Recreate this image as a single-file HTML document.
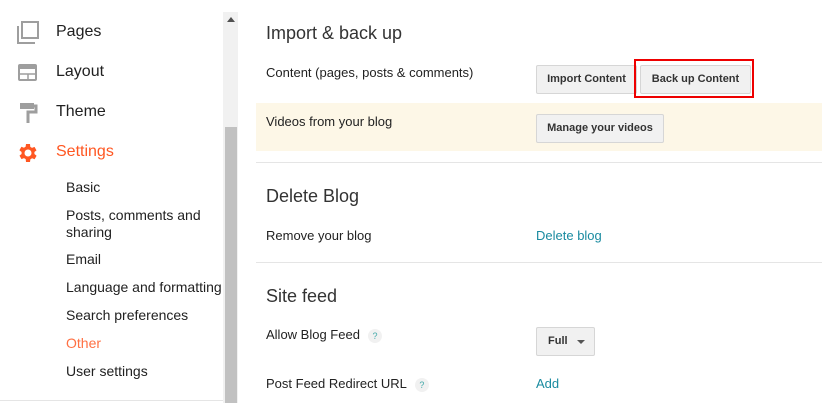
<!DOCTYPE html><html><head><style>
body{margin:0;width:822px;height:403px;overflow:hidden;background:#fff;font-family:"Liberation Sans",Arial,sans-serif;position:relative}
.a{position:absolute;white-space:nowrap}
.nav{font-size:16px;color:#212121}
.sub{font-size:14px;color:#212121}
.h{font-size:18px;color:#333}
.l{font-size:13px;color:#222}
.btn{position:absolute;background:#f1f1f1;border:1px solid #d6d6d6;border-radius:2px;font-size:11px;font-weight:bold;color:#333;text-align:center;box-sizing:border-box;line-height:27px}
.lnk{font-size:13px;color:#1a8ba0}
.q{display:inline-block;width:14px;height:14px;border-radius:7px;background:#f1f1f1;color:#4aa;font-size:9px;text-align:center;line-height:14px;margin-left:8px;vertical-align:middle}
.hr{position:absolute;left:256px;width:566px;height:1px;background:#e5e5e5}
</style></head><body>
<div class="a" style="left:223px;top:12px;width:15px;height:391px;background:#f1f1f1"></div>
<div class="a" style="left:225px;top:127px;width:12px;height:276px;background:#c1c1c1"></div>
<div class="a" style="left:227px;top:17px;width:0;height:0;border-left:4px solid transparent;border-right:4px solid transparent;border-bottom:5px solid #505050"></div>
<div class="a" style="left:0;top:400px;width:223px;height:1px;background:#e5e5e5"></div>
<svg class="a" style="left:16px;top:21px" width="24" height="24"><path d="M2 5v17h17" fill="none" stroke="#9e9e9e" stroke-width="2"/><rect x="6" y="1" width="16" height="16" fill="none" stroke="#9e9e9e" stroke-width="2"/></svg>
<svg class="a" style="left:18px;top:63px" width="20" height="20"><rect x="1" y="2" width="17" height="15" rx="1" fill="none" stroke="#9e9e9e" stroke-width="2"/><rect x="1" y="2" width="17" height="4" fill="#9e9e9e"/><path d="M1 11h17M10 11v6" stroke="#9e9e9e" stroke-width="1.5"/></svg>
<svg class="a" style="left:19px;top:102px" width="20" height="22"><rect x="1" y="1" width="14" height="6" fill="#9e9e9e"/><path d="M15 4h2v6h-8v11" fill="none" stroke="#9e9e9e" stroke-width="3"/></svg>
<svg class="a" style="left:16px;top:141px" width="24" height="24" viewBox="0 0 24 24"><path fill="#ff5722" d="M19.4 13a7.5 7.5 0 0 0 0-2l2.1-1.6-2-3.5-2.5 1a7 7 0 0 0-1.7-1L15 3h-4l-.4 2.7a7 7 0 0 0-1.7 1l-2.5-1-2 3.5L6.6 11a7.5 7.5 0 0 0 0 2l-2.1 1.6 2 3.5 2.5-1a7 7 0 0 0 1.7 1L11 21h4l.4-2.7a7 7 0 0 0 1.7-1l2.5 1 2-3.5zM13 15.5a3.5 3.5 0 1 1 0-7 3.5 3.5 0 0 1 0 7z" transform="translate(-1 0)"/></svg>
<div class="a nav" style="left:56px;top:23px">Pages</div>
<div class="a nav" style="left:56px;top:63px">Layout</div>
<div class="a nav" style="left:56px;top:103px">Theme</div>
<div class="a nav" style="left:56px;top:143px;color:#ff5722">Settings</div>
<div class="a sub" style="left:66px;top:179px">Basic</div>
<div class="a sub" style="left:66px;top:207px;line-height:17px">Posts, comments and<br>sharing</div>
<div class="a sub" style="left:66px;top:251px">Email</div>
<div class="a sub" style="left:66px;top:279px">Language and formatting</div>
<div class="a sub" style="left:66px;top:307px">Search preferences</div>
<div class="a sub" style="left:66px;top:335px;color:#ff7043">Other</div>
<div class="a sub" style="left:66px;top:363px">User settings</div>

<div class="a h" style="left:266px;top:23px">Import &amp; back up</div>
<div class="a l" style="left:266px;top:65px">Content (pages, posts &amp; comments)</div>
<div class="btn" style="left:536px;top:65px;width:101px;height:29px">Import Content</div>
<div class="a" style="left:634px;top:59px;width:116px;height:35px;border:2px solid #e00"></div>
<div class="btn" style="left:640px;top:65px;width:111px;height:29px">Back up Content</div>
<div class="a" style="left:256px;top:103px;width:566px;height:48px;background:#fdf7e7"></div>
<div class="a l" style="left:266px;top:114px">Videos from your blog</div>
<div class="btn" style="left:536px;top:114px;width:128px;height:29px">Manage your videos</div>
<div class="hr" style="top:162px"></div>
<div class="a h" style="left:266px;top:186px">Delete Blog</div>
<div class="a l" style="left:266px;top:228px">Remove your blog</div>
<div class="a lnk" style="left:536px;top:228px">Delete blog</div>
<div class="hr" style="top:262px"></div>
<div class="a h" style="left:266px;top:286px">Site feed</div>
<div class="a l" style="left:266px;top:327px">Allow Blog Feed<span class="q">?</span></div>
<div class="btn" style="left:536px;top:327px;width:59px;height:29px;text-align:left;padding-left:11px">Full<span style="position:absolute;left:40px;top:12px;border-left:4px solid transparent;border-right:4px solid transparent;border-top:4px solid #555"></span></div>
<div class="a l" style="left:266px;top:376px">Post Feed Redirect URL<span class="q">?</span></div>
<div class="a lnk" style="left:536px;top:376px">Add</div>
</body></html>
